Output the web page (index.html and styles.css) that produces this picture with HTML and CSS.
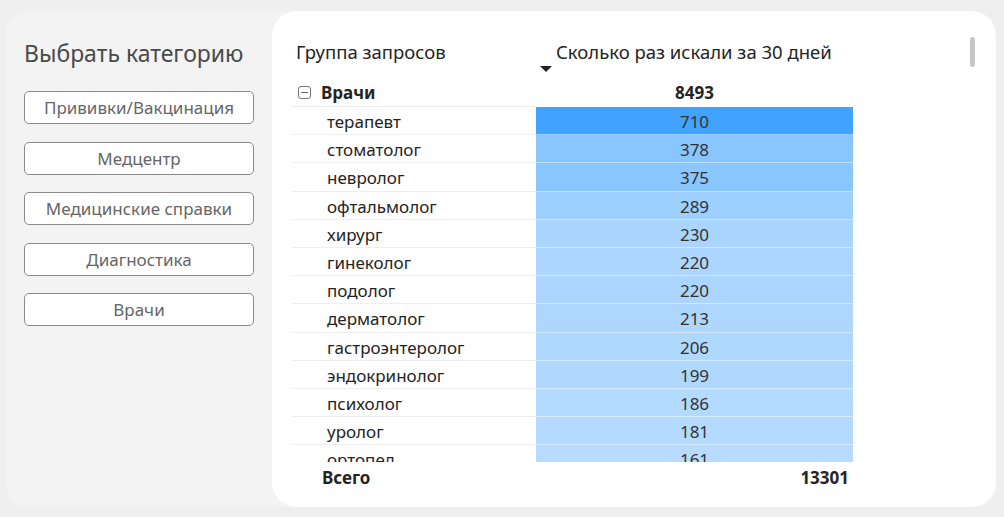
FILE: index.html
```html
<!DOCTYPE html>
<html lang="ru">
<head>
  <meta charset="UTF-8" />
  <meta name="viewport" content="width=device-width, initial-scale=1.0"/>
  <title>Поисковые запросы – врачи</title>
  <link rel="stylesheet" href="styles.css">
</head>
<body>
  <div class="page">
    <div class="sidebar">
      <h1 class="sidebar-title">Выбрать категорию</h1>
      <button class="cat-btn">Прививки/Вакцинация</button>
      <button class="cat-btn">Медцентр</button>
      <button class="cat-btn">Медицинские справки</button>
      <button class="cat-btn">Диагностика</button>
      <button class="cat-btn">Врачи</button>
    </div>

    <div class="report">
      <div class="scrollbar"></div>

      <div class="head-row">
        <div class="head-label">Группа запросов</div>
        <div class="head-value">
          <span class="sort-arrow"></span>
          <span>Сколько раз искали за 30 дней</span>
        </div>
      </div>

      <div class="group-row">
        <div class="group-label">
          <span class="collapse-box"></span>
          <span>Врачи</span>
        </div>
        <div class="group-value">8493</div>
      </div>

      <div class="rows">
        <div class="row"><div class="cell-label">терапевт</div><div class="cell-value" style="background: rgb(65, 163, 255);">710</div></div>
        <div class="row"><div class="cell-label">стоматолог</div><div class="cell-value" style="background: rgb(137, 198, 255);">378</div></div>
        <div class="row"><div class="cell-label">невролог</div><div class="cell-value" style="background: rgb(138, 198, 255);">375</div></div>
        <div class="row"><div class="cell-label">офтальмолог</div><div class="cell-value" style="background: rgb(157, 207, 255);">289</div></div>
        <div class="row"><div class="cell-label">хирург</div><div class="cell-value" style="background: rgb(169, 213, 255);">230</div></div>
        <div class="row"><div class="cell-label">гинеколог</div><div class="cell-value" style="background: rgb(172, 214, 255);">220</div></div>
        <div class="row"><div class="cell-label">подолог</div><div class="cell-value" style="background: rgb(172, 214, 255);">220</div></div>
        <div class="row"><div class="cell-label">дерматолог</div><div class="cell-value" style="background: rgb(173, 215, 255);">213</div></div>
        <div class="row"><div class="cell-label">гастроэнтеролог</div><div class="cell-value" style="background: rgb(175, 216, 255);">206</div></div>
        <div class="row"><div class="cell-label">эндокринолог</div><div class="cell-value" style="background: rgb(176, 216, 255);">199</div></div>
        <div class="row"><div class="cell-label">психолог</div><div class="cell-value" style="background: rgb(179, 218, 255);">186</div></div>
        <div class="row"><div class="cell-label">уролог</div><div class="cell-value" style="background: rgb(180, 218, 255);">181</div></div>
        <div class="row"><div class="cell-label">ортопед</div><div class="cell-value" style="background: rgb(183, 220, 255);">161</div></div>
        <div class="row"><div class="cell-label">кардиолог</div><div class="cell-value" style="background: rgb(185, 221, 255);">150</div></div>
        <div class="row"><div class="cell-label">лор</div><div class="cell-value" style="background: rgb(187, 222, 255);">142</div></div>
      </div>

      <div class="total-row">
        <div class="total-label">Всего</div>
        <div class="total-value">13301</div>
      </div>
    </div>
  </div>
</body>
</html>
```

FILE: styles.css
```css
* {
  box-sizing: border-box;
}
body, html {
  margin: 0;
  padding: 0;
  height: 100vh;
  overflow: hidden;
  background: #efefef;
  font-family: "Noto Sans", "Open Sans", sans-serif;
  color: #252423;
}
.page {
  display: flex;
  height: 496px;
  margin: 11px 8px 0 6px;
  background: #f3f3f3;
  border-radius: 22px;
}
.sidebar {
  width: 266px;
  flex-shrink: 0;
  padding: 26px 0 0 18px;
}
.sidebar-title {
  margin: 0 0 22px 0;
  font-size: 23px;
  font-weight: 400;
  color: #4a4a4a;
  line-height: 32px;
}
.cat-btn {
  display: block;
  width: 230px;
  height: 33px;
  margin-bottom: 17.5px;
  padding: 0;
  background: #fff;
  border: 1px solid #8a8a8a;
  border-radius: 5px;
  font-family: "Noto Sans", "Open Sans", sans-serif;
  font-size: 17px;
  color: #666;
}
.report {
  position: relative;
  flex: 1;
  background: #fff;
  border-radius: 25px;
  padding: 29px 0 0 20px;
  font-size: 17px;
}
.scrollbar {
  position: absolute;
  top: 26px;
  left: 698px;
  width: 5px;
  height: 30px;
  background: #c6c6c6;
  border-radius: 3px;
}
.head-row {
  display: flex;
  height: 39px;
  font-size: 18.5px;
}
.head-label {
  width: 244px;
  padding-left: 4px;
  line-height: 24px;
}
.head-value {
  display: flex;
  align-items: flex-start;
  gap: 4px;
  line-height: 24px;
}
.sort-arrow {
  margin-top: 26px;
  width: 0;
  height: 0;
  border-left: 6px solid transparent;
  border-right: 6px solid transparent;
  border-top: 6px solid #222;
  margin-left: 4px;
}
.group-row {
  display: flex;
  height: 28px;
  font-weight: 700;
}
.group-label {
  width: 244px;
  display: flex;
  align-items: center;
  gap: 10px;
  padding-left: 6px;
  border-bottom: 1px solid #ececec;
}
.collapse-box {
  width: 13px;
  height: 13px;
  border: 1px solid #777;
  border-radius: 3px;
  position: relative;
}
.collapse-box::after {
  content: "";
  position: absolute;
  left: 2px;
  right: 2px;
  top: 5px;
  height: 1px;
  background: #666;
}
.group-value {
  width: 317px;
  text-align: center;
  line-height: 28px;
}
.rows {
  height: 355px;
  overflow: hidden;
}
.row {
  display: flex;
  height: 28.2px;
}
.cell-label {
  width: 244px;
  padding-left: 35px;
  line-height: 29px;
  border-bottom: 1px solid #efefef;
}
.cell-value {
  width: 317px;
  text-align: center;
  line-height: 29px;
  color: #333;
  border-bottom: 1px solid rgba(255, 255, 255, 0.45);
}
.total-row {
  display: flex;
  height: 31px;
  align-items: center;
  font-weight: 700;
}
.total-label {
  width: 244px;
  padding-left: 30px;
}
.total-value {
  width: 317px;
  text-align: right;
  padding-right: 4px;
}
```
